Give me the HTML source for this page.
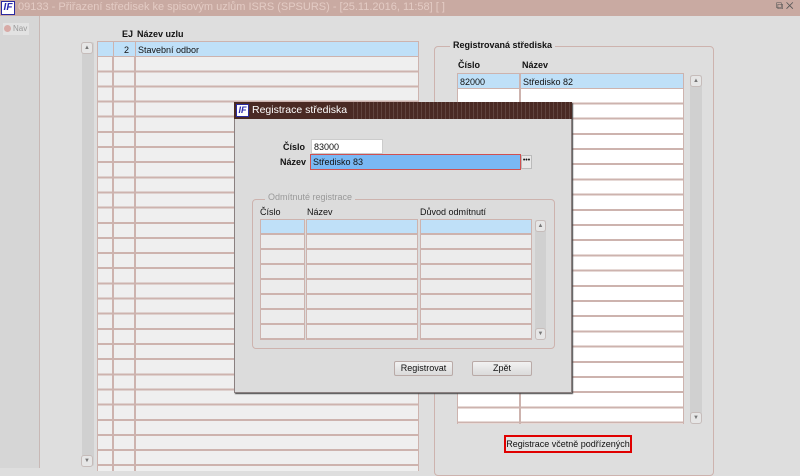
<!DOCTYPE html>
<html><head><meta charset="utf-8"><style>
*{margin:0;padding:0;box-sizing:border-box}
body{width:800px;height:468px;overflow:hidden;background:#dedede;font-family:"Liberation Sans",sans-serif;font-size:9px;color:#111;position:relative}
.a{position:absolute}
.b{font-weight:bold}
.col{position:absolute;border-left:1px solid #cdb3ae;border-right:1px solid #cdb3ae}
.L{background:repeating-linear-gradient(to bottom,#cdb3ae 0 1px,#efefef 1px 14.15px,#cdb3ae 14.15px 15.15px)}
.R{background:repeating-linear-gradient(to bottom,#cdb3ae 0 1px,#fff 1px 14.2px,#cdb3ae 14.2px 15.2px)}
.D{background:repeating-linear-gradient(to bottom,#cdb3ae 0 1px,#ececec 1px 14px,#cdb3ae 14px 15px)}
.sb{position:absolute;background:#d0d0d0;border-radius:2px}
.arr{position:absolute;width:12px;height:12px;background:#e6e6e6;border:1px solid #c6bcba;border-radius:3px;font-size:6px;color:#777;text-align:center;line-height:10px}
.grp{position:absolute;border:1px solid #cdb3ae;border-radius:4px}
.btn{position:absolute;background:linear-gradient(#f2f2f2,#dadada);border:1px solid #b9aaa7;border-radius:2px;text-align:center;line-height:13px;font-size:9px}
</style></head><body>
<div class="a" style="left:0;top:0;width:800px;height:16px;background:#c9aaa2"></div>
<div class="a" style="left:1px;top:1px;width:14px;height:14px;background:#fff;border:1px solid #2a2aa0;color:#2a2ab0;font-weight:bold;font-style:italic;font-size:10px;line-height:12px;text-align:center">IF</div>
<div class="a" style="left:18px;top:1px;color:#e3cbc4;font-size:11px;white-space:nowrap">09133 - Přiřazení středisek ke spisovým uzlům ISRS (SPSURS) - [25.11.2016, 11:58] [ ]</div>
<div class="a" style="left:776px;top:1px;color:#555;font-size:10px">⧉ ✕</div>
<div class="a" style="left:0;top:16px;width:40px;height:452px;background:#d6d6d6;border-right:1px solid #c8b8b5"></div>
<div class="a" style="left:3px;top:23px;width:26px;height:12px;background:#e2e2e2;color:#999;font-size:8px;line-height:12px"><span style="display:inline-block;width:7px;height:7px;border-radius:50%;background:#d8aaa6;margin:0 2px 0 1px;vertical-align:-1px"></span>Nav</div>
<div class="a b" style="left:122px;top:29px">EJ</div>
<div class="a b" style="left:137px;top:29px">Název uzlu</div>
<div class="sb" style="left:82px;top:42px;width:12px;height:424px"></div>
<div class="arr" style="left:81px;top:42px">▲</div>
<div class="arr" style="left:81px;top:455px">▼</div>
<div class="col L" style="left:97px;top:41px;width:16px;height:430px"></div>
<div class="col L" style="left:113px;top:41px;width:22px;height:430px"></div>
<div class="col L" style="left:135px;top:41px;width:284px;height:430px"></div>
<div class="a" style="left:98px;top:42px;width:320px;height:14px;background:#bfe0f8"></div>
<div class="a" style="left:113px;top:42px;width:1px;height:14px;background:#cdb3ae"></div>
<div class="a" style="left:135px;top:42px;width:1px;height:14px;background:#cdb3ae"></div>
<div class="a" style="left:124px;top:45px">2</div>
<div class="a" style="left:138px;top:45px">Stavební odbor</div>
<div class="grp" style="left:434px;top:46px;width:280px;height:430px"></div>
<div class="a b" style="left:450px;top:40px;background:#dedede;padding:0 3px">Registrovaná střediska</div>
<div class="a b" style="left:458px;top:60px">Číslo</div>
<div class="a b" style="left:522px;top:60px">Název</div>
<div class="col R" style="left:457px;top:73px;width:63px;height:351px"></div>
<div class="col R" style="left:520px;top:73px;width:164px;height:351px"></div>
<div class="a" style="left:458px;top:74px;width:225px;height:14px;background:#bfe0f8"></div>
<div class="a" style="left:519px;top:74px;width:2px;height:14px;background:#cdb3ae"></div>
<div class="a" style="left:460px;top:77px">82000</div>
<div class="a" style="left:523px;top:77px">Středisko 82</div>
<div class="sb" style="left:690px;top:75px;width:12px;height:347px"></div>
<div class="arr" style="left:690px;top:75px">▲</div>
<div class="arr" style="left:690px;top:412px">▼</div>
<div class="a" style="left:504px;top:435px;width:128px;height:18px;border:2px solid #e00000;background:#e2e2e2;line-height:14px;text-align:center;font-size:9px">Registrace včetně podřízených</div>
<div class="a" style="left:234px;top:102px;width:338px;height:291px;background:#dcdcdc;border:1px solid #8a8080;box-shadow:1px 1px 1px #444"></div>
<div class="a" style="left:234px;top:102px;width:338px;height:17px;background:#4a2a24 repeating-linear-gradient(90deg,transparent 0 3px,rgba(255,255,255,.12) 3px 4px)"></div>
<div class="a" style="left:234px;top:102px;width:118px;height:17px;background:#4a2a24"></div>
<div class="a" style="left:236px;top:104px;width:13px;height:13px;background:#fff;border:1px solid #2a2aa0;color:#2a2ab0;font-weight:bold;font-style:italic;font-size:9px;line-height:11px;text-align:center">IF</div>
<div class="a" style="left:252px;top:104px;color:#fff;font-size:10.5px">Registrace střediska</div>
<div class="a b" style="left:283px;top:142px">Číslo</div>
<div class="a" style="left:311px;top:139px;width:72px;height:15px;background:#fff;border:1px solid #ccc;padding:2px 2px">83000</div>
<div class="a b" style="left:280px;top:157px">Název</div>
<div class="a" style="left:310px;top:154px;width:211px;height:16px;background:#79b8f4;border:1px solid #d05050;padding:2px 2px">Středisko 83</div>
<div class="a" style="left:521px;top:155px;width:11px;height:14px;background:#e8e8e8;border:1px solid #bbb;font-size:7px;text-align:center;line-height:10px">•••</div>
<div class="grp" style="left:252px;top:199px;width:303px;height:150px"></div>
<div class="a" style="left:265px;top:192px;background:#dcdcdc;padding:0 3px;color:#999">Odmítnuté registrace</div>
<div class="a" style="left:260px;top:207px">Číslo</div>
<div class="a" style="left:307px;top:207px">Název</div>
<div class="a" style="left:420px;top:207px">Důvod odmítnutí</div>
<div class="col D" style="left:260px;top:219px;width:45px;height:121px"></div>
<div class="col D" style="left:306px;top:219px;width:112px;height:121px"></div>
<div class="col D" style="left:420px;top:219px;width:112px;height:121px"></div>
<div class="a" style="left:261px;top:220px;width:43px;height:13px;background:#bfe0f8"></div>
<div class="a" style="left:307px;top:220px;width:110px;height:13px;background:#bfe0f8"></div>
<div class="a" style="left:421px;top:220px;width:110px;height:13px;background:#bfe0f8"></div>
<div class="sb" style="left:535px;top:220px;width:11px;height:119px"></div>
<div class="arr" style="left:535px;top:220px;width:11px">▲</div>
<div class="arr" style="left:535px;top:328px;width:11px">▼</div>
<div class="btn" style="left:394px;top:361px;width:59px;height:15px">Registrovat</div>
<div class="btn" style="left:472px;top:361px;width:60px;height:15px">Zpět</div>
</body></html>
